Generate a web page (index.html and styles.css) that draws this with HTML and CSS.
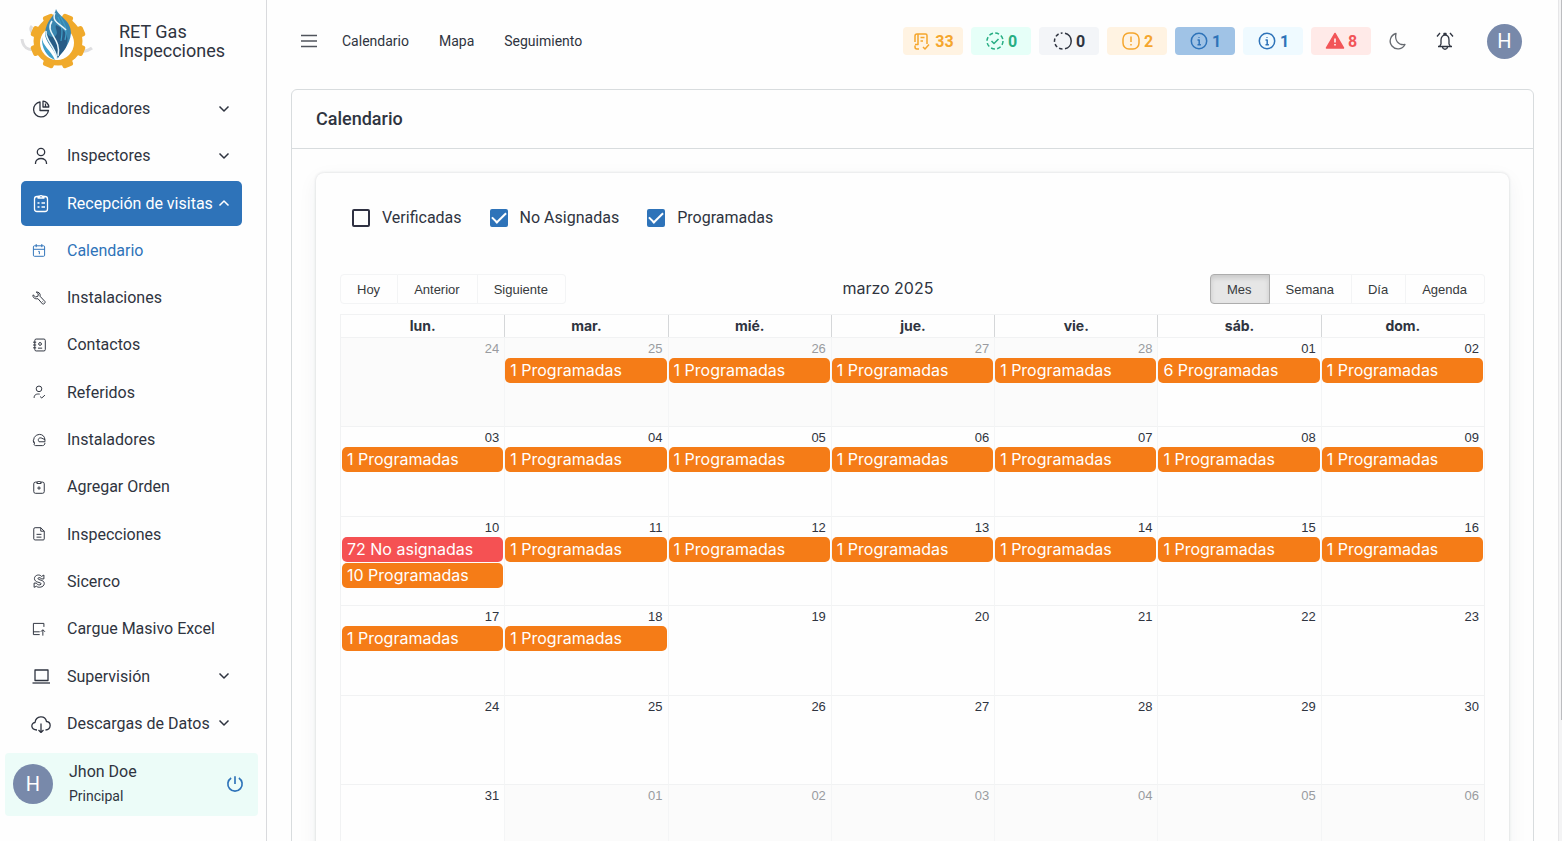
FILE: index.html
```
<!DOCTYPE html>
<html lang="es">
<head>
<meta charset="utf-8">
<meta name="viewport" content="width=device-width, initial-scale=1">
<title>RET Gas Inspecciones</title>
<link rel="stylesheet" href="styles.css">
</head>
<body>
<svg class="defs" aria-hidden="true">
  <symbol id="down" viewBox="0 0 12 12"><path d="M1.500 3.500 6 8l4.500-4.500"/></symbol>
  <symbol id="info" viewBox="0 0 20 20"><circle cx="10" cy="10" r="7.700"/><path d="M8.500 9h1.700v4.500M8.500 13.700h3.400M10 6v.8"/></symbol>
</svg>
<div class="app">
  <aside class="sidebar">
    <div class="brand">
      <svg class="logo" viewBox="0 0 80 70" aria-hidden="true">
        <path fill="none" stroke="#dedee0" stroke-width="3" d="M14 21c-3 3 0 5 0 7M4 34c1 12 11 12 19 9M74 43c-5 4-9 3-13 4"/>
        <g fill="#f0aa2c">
          <circle cx="40" cy="36" r="24.500"/>
          <g transform="rotate(22.500 40 36)"><rect x="34.500" y="8" width="11" height="56" rx="2.500"/><rect x="34.500" y="8" width="11" height="56" rx="2.500" transform="rotate(45 40 36)"/><rect x="34.500" y="8" width="11" height="56" rx="2.500" transform="rotate(90 40 36)"/><rect x="34.500" y="8" width="11" height="56" rx="2.500" transform="rotate(135 40 36)"/></g>
        </g>
        <circle cx="39" cy="38" r="17" fill="#fff"/>
        <path fill="#3a86b0" d="M38 4c-1 7-10 11-11 24 0 10 9 14 12 26 5-7 13-14 14-26C53 15 41 12 38 4z"/>
        <path fill="#285c86" d="M38 20c9 4 13 11 11 19-1 6-6 9-9 14-1-10-11-14-11-24 4 4 9 4 10-1 0-3-2-5-1-8z"/>
        <path fill="none" stroke="#3f9fc8" stroke-width="1.200" d="M42 11c4 7 8 12 5 24M40 12c4 9 5 13 3 24"/>
        <path fill="none" stroke="#e8f6fb" stroke-width="1.500" d="M37 8c-4 9 6 11 11 17M34 16c-8 12 10 17 6 35M28 26c-1 10 9 14 11 28"/>
        <path fill="#3f9fc8" d="M24 32c0 9 9 13 13 23-8-3-14-12-13-23z"/>
      </svg>
      <div class="brand-name">RET Gas<br>Inspecciones</div>
    </div>
    <nav class="menu" aria-label="Principal">
      <button class="item"><svg class="icon" viewBox="0 0 20 20"><path d="M9 3a7.500 7.500 0 1 0 8.500 8.500H9z"/><path d="M12 2.200V8h5.800A6 6 0 0 0 12 2.200zM14.500 4.500V8"/></svg><span>Indicadores</span><svg class="chev"><use href="#down"/></svg></button>
      <button class="item"><svg class="icon" viewBox="0 0 20 20"><circle cx="10" cy="6" r="3.700"/><path d="M4.500 18v-1a5.500 4.500 0 0 1 11 0v1"/></svg><span>Inspectores</span><svg class="chev"><use href="#down"/></svg></button>
      <button class="item open"><svg class="icon" viewBox="0 0 20 20"><rect x="3.500" y="3.500" width="13" height="15" rx="2.500"/><path class="fill-bg" d="M7 5V3.500h1.500a1.700 1.700 0 0 1 3 0H13V5z"/><path d="M6.500 10h2M10.500 10h3.500M6.500 14h2M10.500 14h3.500"/></svg><span>Recepción de visitas</span><svg class="chev up"><use href="#down"/></svg></button>
      <a class="item sub current" href="#calendario"><svg class="icon" viewBox="0 0 20 20"><rect x="2" y="4" width="16" height="15" rx="1.500"/><path d="M2 9h16M6 1.500V6M14 1.500V6M9 12h1.500v4"/></svg><span>Calendario</span></a>
      <a class="item sub" href="#instalaciones"><svg class="icon" viewBox="0 0 20 20"><path d="M6 1.500c3.500-.5 6.500 2 5.500 6l7 7.500c1 2-1.500 4.500-3.500 3.500L8.500 11C4 12 .5 9 1.500 5.500L5 8.500l3.500-1L9 4z"/><path d="m15 15 1 1"/></svg><span>Instalaciones</span></a>
      <a class="item sub" href="#contactos"><svg class="icon" viewBox="0 0 20 20"><rect x="4" y="1.500" width="15" height="17" rx="2"/><path d="M1.500 6H6M1.500 10H6M1.500 14H6M8.500 14.500h6"/><circle cx="11.500" cy="8.500" r="2"/></svg><span>Contactos</span></a>
      <a class="item sub" href="#referidos"><svg class="icon" viewBox="0 0 20 20"><circle cx="10" cy="5.500" r="4"/><path d="M3 18.500c0-5 3.500-6 8-5.500M11.500 16.500l2.500 2 4.500-4"/></svg><span>Referidos</span></a>
      <a class="item sub" href="#instaladores"><svg class="icon" viewBox="0 0 20 20"><path d="M18.500 9.500C18 4.500 15 2 10.500 2A8.500 8.500 0 0 0 3.500 15c-1 .5-.5 3 1.500 3h10c2 0 3.500-1.500 3.500-4M18.500 9.500 13 7C9 6.500 8 10 10 12.500h8.500v-3M1.500 11l2 4"/></svg><span>Instaladores</span></a>
      <a class="item sub" href="#orden"><svg class="icon" viewBox="0 0 20 20"><rect x="2.500" y="3" width="15" height="16" rx="2.500"/><path class="fill-bg" d="M7 5V3h1.500a1.600 1.600 0 0 1 3 0H13v2z"/><path d="M10 9v5M7.500 11.500h5"/></svg><span>Agregar Orden</span></a>
      <a class="item sub" href="#inspecciones"><svg class="icon" viewBox="0 0 20 20"><path d="M4.500 1h8l5 5V17a1.500 1.500 0 0 1-1.500 1.500H4.500a2 2 0 0 1-2-1.500V3a2 2 0 0 1 2-2zM12.500 1V6h5M6.500 10.500h7M6.500 14.500h7"/></svg><span>Inspecciones</span></a>
      <a class="item sub" href="#sicerco"><svg class="icon" viewBox="0 0 20 20"><path d="M17 1.500V7h-3.500c-.5-2-5-2.500-5-.5 0 2.500 9 1.500 9 7 0 6-9.500 6.500-11 4L3 19v-6h3.500c.5 3 6.500 3.500 6.500 1 0-2.500-9.500-1.500-9.500-7.500 0-5.500 8-6.500 10-3z"/></svg><span>Sicerco</span></a>
      <a class="item sub" href="#cargue"><svg class="icon" viewBox="0 0 20 20"><path d="M17 7V2H2v16h9M2 14h9M15.500 19.500v-8M12.500 14l3-3 3 3"/></svg><span>Cargue Masivo Excel</span></a>
      <button class="item"><svg class="icon" viewBox="0 0 20 20"><rect x="4" y="4" width="13" height="10.500"/><path d="M1.500 17h17.500"/></svg><span>Supervisión</span><svg class="chev"><use href="#down"/></svg></button>
      <button class="item"><svg class="icon" viewBox="0 0 20 20"><path d="M6 17C-.5 17-.5 10 4 9.500 5 2.500 14 2 15.500 8.500c5 .5 5 8-1 8.500M10 10.500v9M7.500 17l2.500 2.500 2.500-2.500"/></svg><span>Descargas de Datos</span><svg class="chev"><use href="#down"/></svg></button>
    </nav>
    <div class="user">
      <span class="avatar large">H</span>
      <div class="who"><div class="name">Jhon Doe</div><div class="role">Principal</div></div>
      <button class="power" aria-label="Salir"><svg class="icon" viewBox="0 0 20 20"><path d="M6.500 4.500a6.500 6.500 0 1 0 7 0M10 3v7"/></svg></button>
    </div>
  </aside>

  <div class="page">
    <header class="topbar">
      <button class="plain burger" aria-label="Menú"><svg class="icon" viewBox="0 0 20 20"><path d="M2 4.500h16M2 10h16M2 15.500h16"/></svg></button>
      <nav class="links" aria-label="Accesos"><a href="#calendario">Calendario</a><a href="#mapa">Mapa</a><a href="#seguimiento">Seguimiento</a></nav>
      <div class="badges">
        <button class="badge amber"><svg class="icon" viewBox="0 0 20 20"><path d="M7 18H5a2 2 0 0 1-2-2v-1.500M3 11V5a2 2 0 0 1 2-2h8.500A1.500 1.500 0 0 1 15 4.500V13M6 3v10.500H3M8.500 6.500h4M8.500 10h2.500M11 16l2 2 4-4.500"/></svg>33</button>
        <button class="badge green"><svg class="icon" viewBox="0 0 20 20"><circle cx="10" cy="10" r="8" stroke-dasharray="4 2.280"/><path d="m6.500 10 2.500 2.500 4.500-4.500"/></svg>0</button>
        <button class="badge gray"><svg class="icon" viewBox="0 0 20 20"><path d="M12 2.200a8 8 0 0 1 0 15.600"/><path stroke-dasharray="3.500 2.300" d="M9.500 18a8 8 0 0 1 0-16"/></svg>0</button>
        <button class="badge amber"><svg class="icon" viewBox="0 0 20 20"><rect x="2" y="2" width="16" height="16" rx="6"/><path d="M10 5.500v5.500M10 13v1.500"/></svg>2</button>
        <button class="badge blue"><svg class="icon"><use href="#info"/></svg>1</button>
        <button class="badge sky"><svg class="icon"><use href="#info"/></svg>1</button>
        <button class="badge red"><svg class="icon" viewBox="0 0 20 20"><path fill="currentColor" d="m10 2.500 8.500 14.500h-17z"/><path stroke="#fff" d="M10 7.500v4M10 13v1.500"/></svg>8</button>
      </div>
      <button class="plain moon" aria-label="Modo oscuro"><svg class="icon" viewBox="0 0 20 20"><path d="M9 2.500a7.800 7.800 0 1 0 9 11C11 14.500 7.500 9 9 2.500z"/></svg></button>
      <button class="plain" aria-label="Avisos"><svg class="icon" viewBox="0 0 20 20"><path d="M3 15.500h14M4.500 15.500 6 13V9c0-6.500 8-6.500 8 0v4l1.500 2.500M9 4V2.500h2V4M7.500 16c.5 3 4.500 3 5 0M5 2 2 5.500M15 2l3 3.500"/></svg></button>
      <span class="avatar">H</span>
    </header>
    <main class="card">
      <h1 class="card-title">Calendario</h1>
      <section class="panel">
        <div class="filters">
          <label><input type="checkbox">Verificadas</label>
          <label><input type="checkbox" checked>No Asignadas</label>
          <label><input type="checkbox" checked>Programadas</label>
        </div>
        <div class="toolbar">
          <div class="group"><button>Hoy</button><button>Anterior</button><button>Siguiente</button></div>
          <div class="month">marzo 2025</div>
          <div class="group"><button class="active">Mes</button><button>Semana</button><button>Día</button><button>Agenda</button></div>
        </div>
        <table class="calendar">
          <thead><tr><th>lun.</th><th>mar.</th><th>mié.</th><th>jue.</th><th>vie.</th><th>sáb.</th><th>dom.</th></tr></thead>
          <tbody>
            <tr><td class="off"><time>24</time></td><td class="off"><time>25</time><button class="event">1 Programadas</button></td><td class="off"><time>26</time><button class="event">1 Programadas</button></td><td class="off"><time>27</time><button class="event">1 Programadas</button></td><td class="off"><time>28</time><button class="event">1 Programadas</button></td><td><time>01</time><button class="event">6 Programadas</button></td><td><time>02</time><button class="event">1 Programadas</button></td></tr>
            <tr><td><time>03</time><button class="event">1 Programadas</button></td><td><time>04</time><button class="event">1 Programadas</button></td><td><time>05</time><button class="event">1 Programadas</button></td><td><time>06</time><button class="event">1 Programadas</button></td><td><time>07</time><button class="event">1 Programadas</button></td><td><time>08</time><button class="event">1 Programadas</button></td><td><time>09</time><button class="event">1 Programadas</button></td></tr>
            <tr><td><time>10</time><button class="event pending">72 No asignadas</button><button class="event">10 Programadas</button></td><td><time>11</time><button class="event">1 Programadas</button></td><td><time>12</time><button class="event">1 Programadas</button></td><td><time>13</time><button class="event">1 Programadas</button></td><td><time>14</time><button class="event">1 Programadas</button></td><td><time>15</time><button class="event">1 Programadas</button></td><td><time>16</time><button class="event">1 Programadas</button></td></tr>
            <tr><td><time>17</time><button class="event">1 Programadas</button></td><td><time>18</time><button class="event">1 Programadas</button></td><td><time>19</time></td><td><time>20</time></td><td><time>21</time></td><td><time>22</time></td><td><time>23</time></td></tr>
            <tr><td><time>24</time></td><td><time>25</time></td><td><time>26</time></td><td><time>27</time></td><td><time>28</time></td><td><time>29</time></td><td><time>30</time></td></tr>
            <tr><td><time>31</time></td><td class="off"><time>01</time></td><td class="off"><time>02</time></td><td class="off"><time>03</time></td><td class="off"><time>04</time></td><td class="off"><time>05</time></td><td class="off"><time>06</time></td></tr>
          </tbody>
        </table>
      </section>
    </main>
  </div>
  <div class="scrollbar" aria-hidden="true"><div class="thumb"></div></div>
</div>
</body>
</html>
```
FILE: styles.css
```
* { box-sizing: border-box; }
body { margin: 0; font-family: Roboto, "Liberation Sans", sans-serif; font-size: 16px; color: #2f3440; background: #fefefe; }
button { font: inherit; color: inherit; background: none; border: 0; padding: 0; margin: 0; cursor: pointer; }
a { color: inherit; text-decoration: none; }
svg { fill: none; stroke: currentColor; stroke-linejoin: round; flex: none; }
.defs { display: none; }
.app { display: flex; height: 100vh; overflow: hidden; }

.sidebar { flex: none; width: 267px; display: flex; flex-direction: column; border-right: 1px solid #d9dadd; padding-bottom: 25px; }
.brand { display: flex; align-items: center; height: 86px; padding: 0 18px 4px; gap: 21px; }
.logo { width: 80px; height: 70px; stroke: none; margin-bottom: 2px; }
.brand-name { font-size: 18px; line-height: 19px; }
.menu { flex: 1; display: flex; flex-direction: column; justify-content: space-between; padding: 0 24px 0 21px; }
.item { display: flex; align-items: center; height: 45px; padding: 0 12px 0 10px; border-radius: 5px; text-align: left; white-space: nowrap; }
.icon { width: 20px; height: 20px; stroke-width: 1.3; }
.item .icon { margin-right: 16px; }
.item.sub .icon { width: 14px; height: 14px; margin: 0 21px 0 1px; stroke-width: 1.4; }
.chev { width: 12px; height: 12px; margin-left: auto; stroke-width: 1.5; }
.chev.up { transform: rotate(180deg); }
.item.open { background: #2e73b9; color: #fff; }
.item.current { color: #2e73b9; }
.fill-bg { fill: #fff; }
.open .fill-bg { fill: #2e73b9; }
.user { display: flex; align-items: center; height: 63px; margin: 7px 8px 0 5px; padding: 0 12px 2px 8px; background: #ecfcf8; border-radius: 4px; }
.avatar { display: grid; place-items: center; width: 35px; height: 35px; border-radius: 50%; background: #7889aa; color: #fff; font-size: 20px; }
.avatar.large { width: 40px; height: 40px; }
.who { margin: 0 auto 0 16px; }
.name { line-height: 24px; }
.role { font-size: 14px; line-height: 24px; }
.power { color: #2e73b9; display: flex; }
.power .icon { width: 22px; height: 22px; stroke-width: 1.5; }

.page { flex: 1; min-width: 0; padding: 0 24px; overflow: hidden; }
.topbar { display: flex; align-items: center; height: 89px; padding: 0 12px 7px 8px; }
.plain { display: flex; margin-right: 28px; }
.burger { color: #50545c; margin-right: 23px; }
.burger .icon { stroke-width: 1.7; }
.moon { color: #666a70; }
.topbar .plain + .avatar { margin-left: 4px; }
.links { display: flex; gap: 30px; font-size: 14px; }
.badges { display: flex; gap: 8px; margin: 0 16px 0 auto; }
.badge { display: flex; align-items: center; justify-content: center; gap: 3px; width: 60px; height: 28px; border-radius: 4px; font-weight: 700; }
.badge .icon { stroke-width: 1.5; }
.amber { background: #fff3e2; color: #f5a62d; }
.green { background: #e6fff8; color: #27ae83; }
.gray { background: #f3f5f8; color: #2f3440; }
.blue { background: #a0c3e6; color: #2e73b9; }
.sky { background: #effaff; color: #2e73b9; }
.red { background: #ffeae8; color: #f25558; }

.card { border: 1px solid #d8dcde; border-radius: 6px; padding-bottom: 24px; }
.card-title { margin: 0; padding: 0 24px; font-size: 18px; font-weight: 500; line-height: 58px; border-bottom: 1px solid #d8dcde; }
.panel { margin: 24px 24px 0; padding: 24px 24px 25px; border-radius: 8px; box-shadow: 0 0 3px rgba(40, 50, 60, .18), 0 6px 20px rgba(40, 50, 60, .06); }
.filters { display: flex; gap: 28px; padding: 0 12px; height: 41px; }
.filters label { display: flex; align-items: center; gap: 12px; }
.filters input { appearance: none; width: 18px; height: 18px; margin: 0; border: 2px solid #2f3142; border-radius: 2px; display: grid; place-items: center; }
.filters input:checked { background: #2e73b9; border-color: #2e73b9; }
.filters input:checked::before { content: ""; width: 12px; height: 6px; border-left: 2px solid #fff; border-bottom: 2px solid #fff; transform: translateY(-2px) rotate(-45deg); }
.toolbar { display: flex; align-items: center; margin: 36px 0 10px; }
.group { display: flex; font-family: "Liberation Sans", Arial, sans-serif; font-size: 13px; }
.group button { height: 30px; padding: 0 17px 0 16px; border: 1px solid #f3f4f5; color: #373a3c; }
.group button + button { border-left: 0; }
.group button:first-child { border-radius: 4px 0 0 4px; }
.group button:last-child { border-radius: 0 4px 4px 0; }
.group .active { background: #e6e6e6; border-color: #adadad; box-shadow: inset 0 3px 5px rgba(0, 0, 0, .125); }
.month { flex: 1; text-align: center; font-family: Inter, sans-serif; line-height: 24px; padding-bottom: 2px; }
.calendar { width: 100%; table-layout: fixed; border-spacing: 0; border: 1px solid #f1f2f3; font-family: Inter, sans-serif; }
.calendar th { height: 22px; padding: 0; font-size: 14px; font-weight: 700; line-height: 22px; }
.calendar th + th { border-left: 1px solid #d5d7d9; }
.calendar tbody tr { height: 89px; }
.calendar tbody tr:nth-child(even) { height: 90px; }
.calendar td { vertical-align: top; padding: 0 1px 0 0; border-top: 1px solid #f1f2f3; }
.calendar td:first-child { padding-left: 1px; }
.calendar td + td { border-left: 1px solid #f4f5f6; }
.calendar time { display: block; padding: 2px 4px 0 0; font-family: "Liberation Sans", Arial, sans-serif; font-size: 13px; line-height: 18px; text-align: right; }
.off { background: #fbfbfb; }
.off time { color: #999ba0; }
.event { display: block; width: 100%; height: 25px; margin-bottom: 1px; padding: 0 5px; border-radius: 5px; background: #f57c17; color: #fff; text-align: left; line-height: 25px; }
.pending { background: #f55153; }

.scrollbar { flex: none; width: 4px; background: #f4f4f5; border-left: 1px solid #e6e6e8; }
.thumb { height: 720px; margin-left: 2px; background: #bcbdc0; }
```
